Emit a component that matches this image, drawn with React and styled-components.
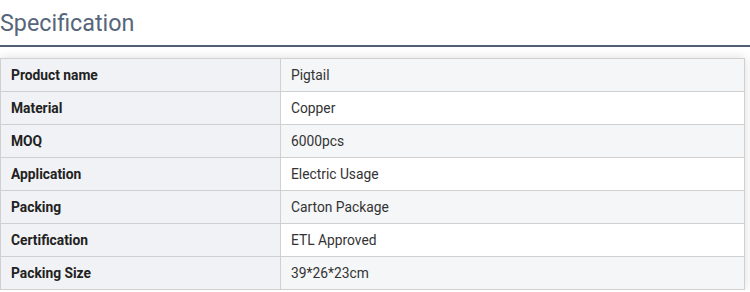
import React from 'react';
import styled, {createGlobalStyle} from 'styled-components';

const GlobalStyle = createGlobalStyle`
  body {
    margin: 0;
    background: #fff;
    font-family: Roboto, "Liberation Sans", Arial, sans-serif;
  }
`;

const Wrapper = styled.div`
  width: 750px;
`;

const Title = styled.h2`
  margin: 0;
  height: 45px;
  line-height: 47px;
  font-size: 23.3px;
  font-weight: 400;
  color: #56657a;
  border-bottom: 2px solid #525f72;
`;

const TableBox = styled.div`
  margin-top: 11px;
  width: 745px;
  box-shadow: 0 0 10px rgba(0, 0, 0, 0.14);
`;

const Table = styled.table`
  width: 100%;
  border-collapse: collapse;
  font-size: 13.8px;
`;

const Row = styled.tr`
  height: 33px;
  background: ${props => (props.odd ? '#fff' : '#f5f6f8')};
`;

const Label = styled.td`
  width: 269px;
  padding: 0 0 0 10px;
  border: 1px solid #d0d0d0;
  background: #f1f2f5;
  color: #222;
  font-weight: 700;
`;

const Value = styled.td`
  padding: 0 0 0 10px;
  border: 1px solid #d0d0d0;
  color: #333;
`;

const specs = [
  ['Product name', 'Pigtail'],
  ['Material', 'Copper'],
  ['MOQ', '6000pcs'],
  ['Application', 'Electric Usage'],
  ['Packing', 'Carton Package'],
  ['Certification', 'ETL Approved'],
  ['Packing Size', '39*26*23cm']
];

export default function App() {
  return (
    <Wrapper>
      <GlobalStyle />
      <Title>Specification</Title>
      <TableBox>
        <Table>
          <tbody>
            {specs.map(([name, val], i) => (
              <Row key={name} odd={i % 2 === 1}>
                <Label>{name}</Label>
                <Value>{val}</Value>
              </Row>
            ))}
          </tbody>
        </Table>
      </TableBox>
    </Wrapper>
  );
}
